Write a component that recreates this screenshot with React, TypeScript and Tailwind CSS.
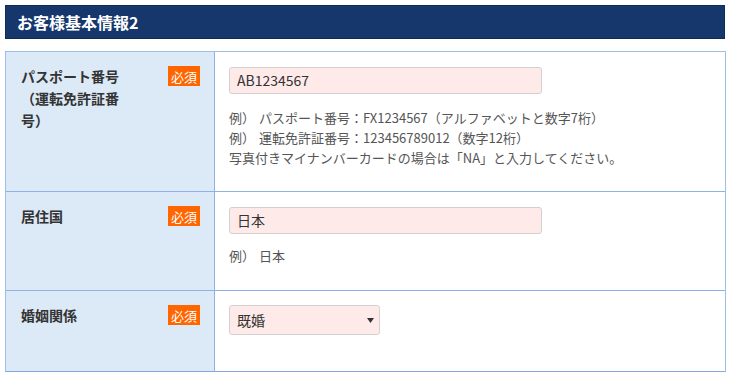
import React from "react";

const font = { fontFamily: '"Noto Sans CJK JP", "Noto Sans", sans-serif' };

function Badge() {
  return (
    <span className="flex h-[20px] w-[32px] shrink-0 items-center justify-center bg-[#ff6600] text-[13px] leading-none text-white">
      必須
    </span>
  );
}

function Label({ children }: { children: React.ReactNode }) {
  return (
    <div className="flex items-start justify-between bg-[#dce9f6] pl-[15px] pr-[14px] pt-[13px] border-r border-[#8db2e6]">
      <div className="w-[105px] text-[14px] font-bold leading-[22px] text-[#333]">{children}</div>
      <div className="pt-[1px]">
        <Badge />
      </div>
    </div>
  );
}

export default function App() {
  return (
    <div className="h-[380px] w-[732px] bg-white pt-[5px]" style={font}>
      <div className="ml-[5px] flex h-[34px] w-[720px] items-center border border-[#0f2b5a] bg-[#16376c] pl-[11px]">
        <span className="text-[16px] font-bold text-white">お客様基本情報2</span>
      </div>

      <div className="ml-[5px] mt-[12px] w-[721px] border border-[#9fbeea] border-b-[#82a9e2]">
        {/* Row 1 */}
        <div className="grid h-[140px] grid-cols-[209px_1fr] border-b border-[#8db2e6]">
          <Label>パスポート番号（運転免許証番号）</Label>
          <div className="pl-[14px] pt-[15px]">
            <div className="flex h-[27px] w-[313px] items-center rounded-[3px] border border-[#d6cfcf] bg-[#ffeaea] px-[7px] text-[14px] text-[#333]">
              AB1234567
            </div>
            <div className="mt-[14px] text-[13px] leading-[20px] text-[#555]">
              <div>
                例）<span className="ml-[4px]">パスポート番号：FX1234567（アルファベットと数字7桁）</span>
              </div>
              <div>
                例）<span className="ml-[4px]">運転免許証番号：123456789012（数字12桁）</span>
              </div>
              <div>写真付きマイナンバーカードの場合は「NA」と入力してください。</div>
            </div>
          </div>
        </div>

        {/* Row 2 */}
        <div className="grid h-[99px] grid-cols-[209px_1fr] border-b border-[#8db2e6]">
          <Label>居住国</Label>
          <div className="pl-[14px] pt-[15px]">
            <div className="flex h-[27px] w-[313px] items-center rounded-[3px] border border-[#d6cfcf] bg-[#ffeaea] px-[7px] text-[14px] text-[#333]">
              日本
            </div>
            <div className="mt-[12px] text-[13px] leading-[20px] text-[#555]">
              例）<span className="ml-[4px]">日本</span>
            </div>
          </div>
        </div>

        {/* Row 3 */}
        <div className="grid h-[80px] grid-cols-[209px_1fr]">
          <Label>婚姻関係</Label>
          <div className="pl-[14px] pt-[14px]">
            <div className="relative flex h-[30px] w-[151px] items-center rounded-[3px] border border-[#d6cfcf] bg-[#ffeaea] px-[7px] text-[14px] text-[#333]">
              既婚
              <svg className="absolute right-[5px] top-[12px]" width="7" height="5" viewBox="0 0 7 5">
                <path d="M0 0 L7 0 L3.5 5 Z" fill="#333" />
              </svg>
            </div>
          </div>
        </div>
      </div>
    </div>
  );
}
